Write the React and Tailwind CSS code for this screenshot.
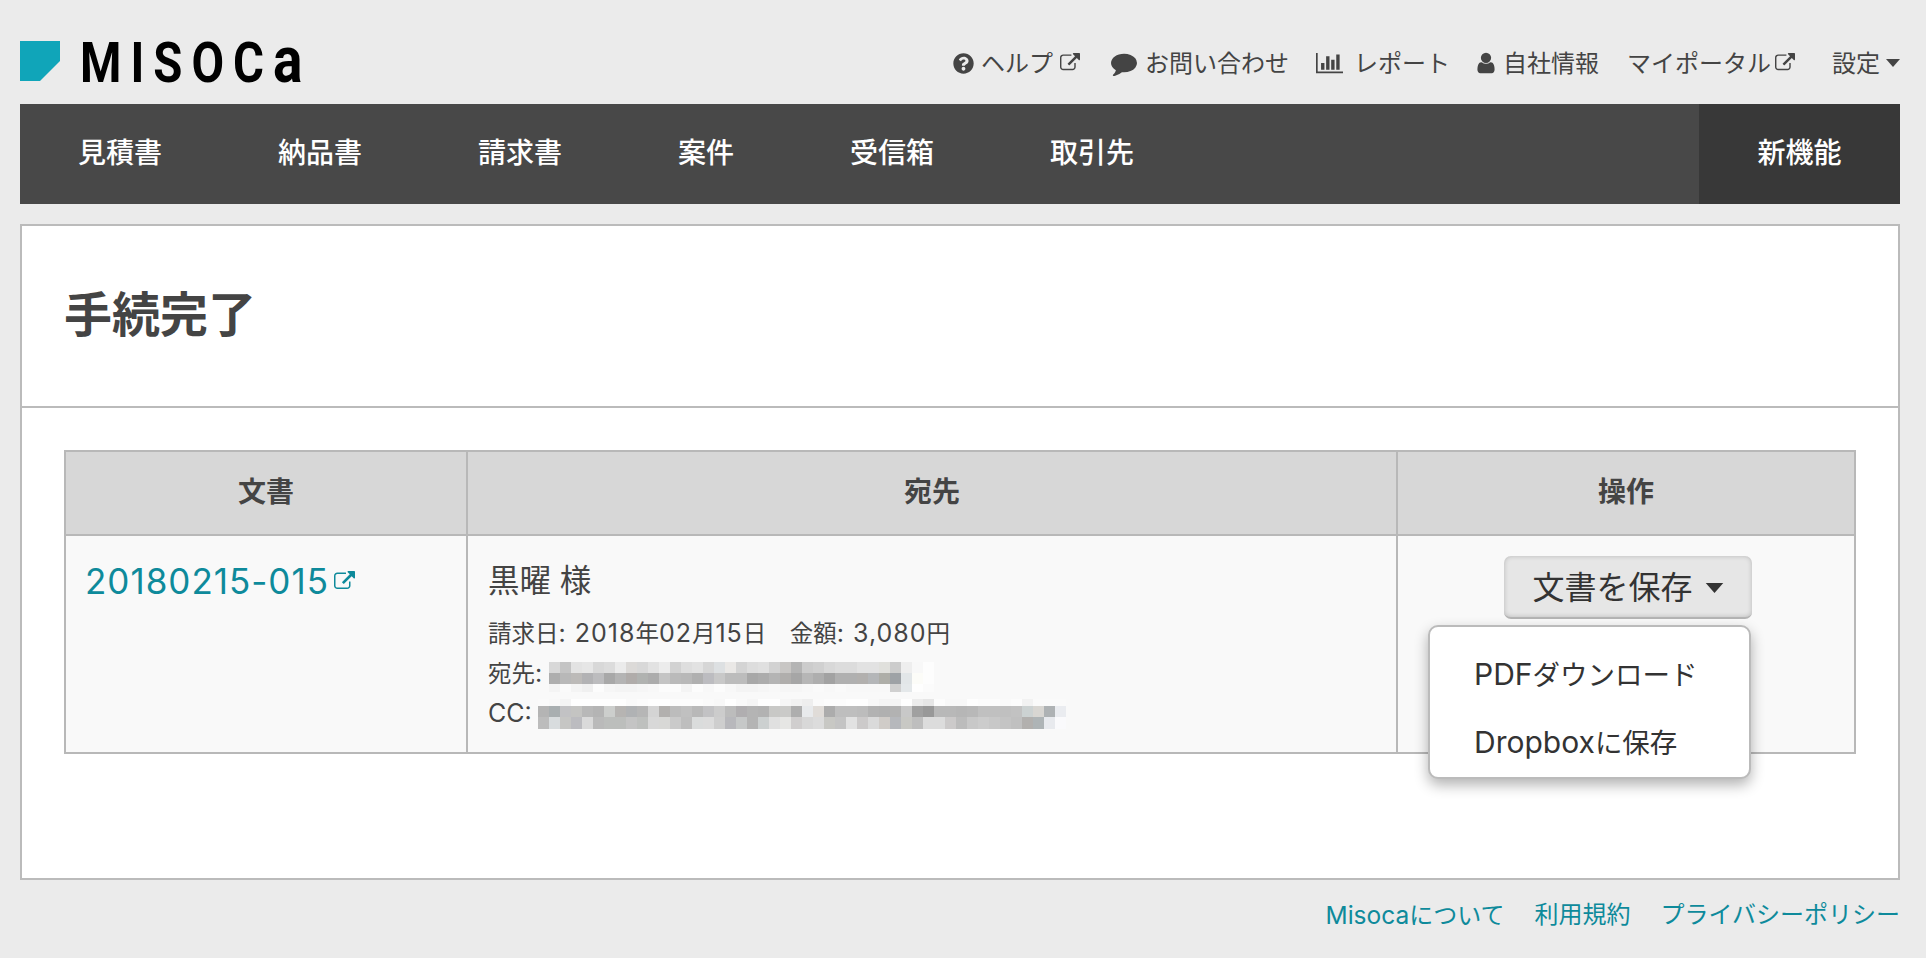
import { FaQuestionCircle } from "react-icons/fa";

const FONT = "[font-family:'Liberation_Sans','Noto_Sans_CJK_JP',sans-serif]";

const blurTo = [
  ["#d8d8d8", "#c4c4c4", "#e3e3e3", "#e6e6e6", "#d8d8d8", "#dcdcdc", "#ebebeb", "#dcdad8", "#d8d8d8", "#e2e2e2", "#ececec", "#d2d2d2", "#dedede", "#e2e2e2", "#d6d6d6", "#dde0e2", "#eae8e6", "#d4d4d4", "#dddddd", "#e0e0e0", "#d2d2d2", "#c8c6c4", "#b4b4b4", "#cccccc", "#d0d0d0", "#d8d8d8", "#dcdcdc", "#dcdcdc", "#e2e2e2", "#e2e2e2", "#e0e0dc", "#cccccc", "#eeeeee", "#f8f8f8", "#fdfdfd"],
  ["#aeaeae", "#b8b8b8", "#bcbab8", "#b2b2b4", "#bcbcbe", "#a8a8a8", "#b4b4b4", "#b0acaa", "#b0b2b0", "#acacac", "#c4c4c4", "#bababa", "#b8b8b8", "#b0b0b0", "#bcbcc0", "#c8c8c8", "#bcbcbc", "#bcbcbc", "#a8a8a8", "#acacac", "#b4b4b4", "#b0aeac", "#a6a6a6", "#b6b6b6", "#aeaeae", "#a2a2a2", "#b0b0b0", "#b0b0b0", "#b2b0ae", "#b4b6b8", "#aeaea8", "#9ea2a6", "#e2e6e8", "#fcfcf8", "#fdfdfd"],
  ["#f4f4f4", "#fafafa", "#f4f4f4", "#f0f0f0", "#fcfcfc", "#f6f6f6", "#f4f4f4", "#f4f4f4", "#f6f6f6", "#f8f8f8", "#fcfcfc", "#fcfcfc", "#f4f4f4", "#fcfcfc", "#f8f8f8", "#fcfcfc", "#f8f8f8", "#f4f4f4", "#f4f4f4", "#f6f6f6", "#f8f8f8", "#f6f6f6", "#f6f6f6", "#f8f8f8", "#fafafa", "#f8f8f8", "#fafafa", "#f8f8f8", "#f8f8f8", "#f8f8f8", "#f8f8f8", "#d0d0d0", "#e4e8ea", "#fefefe", "#fbfbfb"],
];

const blurCc = [
  ["#fafafa", "#f8f8f8", "#f4f4f4", "#fefefe", "#fefefe", "#fefefe", "#fefefe", "#fefefe", "#fafafa", "#fcfcfc", "#fefefe", "#fefefe", "#fcfcfc", "#fcfcfc", "#fcfcfc", "#fafafa", "#f8f8f8", "#ffffff", "#fafafa", "#f6f6f6", "#fefefe", "#fefefe", "#f6f6f6", "#f2f2f2", "#eeeeee", "#fafafa", "#fcfcfc", "#fcfcfc", "#fefefe", "#fefefe", "#f8f8f8", "#f4f4f4", "#f4f4f4", "#fefefe", "#ececec", "#e6e6e6", "#fcfcfc", "#f8f8f8", "#f8f8f8", "#fefefe", "#fcfcfc", "#fcfcfc", "#fafafa", "#fcfcfc", "#f2f2f2", "#fafafa", "#fafafa", "#fafafa"],
  ["#b4b4b4", "#a8aeb0", "#c2c2c4", "#c4c4c2", "#b8b8b8", "#b4b4b4", "#cccecc", "#b6b4b2", "#b0b2b4", "#b6b6b6", "#d4d4d4", "#b2b0ae", "#bcbcbc", "#c0c0c0", "#b8b8b8", "#c2c2c4", "#cccccc", "#bcbcbc", "#b0aeb0", "#b4b4b4", "#b2b2b2", "#c8c8c6", "#cacac8", "#aeaeae", "#e8eaec", "#e0dcd8", "#acacac", "#bebebe", "#bebebe", "#bcbcbc", "#b2b2b2", "#b0b0b0", "#b2b2b2", "#c8c8c8", "#a0a0a0", "#989898", "#b8b8b8", "#b8b8b8", "#b6b6b6", "#b8b8b8", "#c0c0c0", "#c0c0c0", "#c0c0c0", "#c2c2c2", "#ccd2d2", "#d8d6d2", "#aeb2b4", "#eaecf0"],
  ["#bcbcbc", "#d8dcde", "#c6c6c4", "#bcbcc0", "#dadada", "#bababa", "#bcbebc", "#bcbebc", "#c4c4c4", "#bec0be", "#d8d8d8", "#d8d8d6", "#cacaca", "#bebebe", "#dadcdc", "#dcdcdc", "#cecece", "#b8b8bc", "#c6c8c8", "#b4b4b4", "#ccd0d0", "#e0e0e0", "#e6e6e4", "#d0cece", "#d8d8d8", "#dcdcdc", "#c8c8c4", "#c4c4c4", "#e2e2e2", "#cccaca", "#dadada", "#d0ccc8", "#b6b8bc", "#c8c8c4", "#bebebe", "#dcdcdc", "#dcdcdc", "#cccaca", "#bcbcbc", "#c8c8c8", "#cccccc", "#c8c8c8", "#c4c4c4", "#c0c0c0", "#b2b0ae", "#aeb4b6", "#e8eaee", "#fafafc"],
];

// 個人情報のモザイク
const Blur = ({ rows, sizes }) => (
  <div className="flex flex-col">
    {rows.map((row, i) => (
      <div key={i} className="flex" style={{ height: sizes[i] }}>
        {row.map((c, j) => (
          <div key={j} className="w-[11px]" style={{ backgroundColor: c }} />
        ))}
      </div>
    ))}
  </div>
);

// 欧文は和文より少し大きく見える
const En = ({ children }) => <span className="font-['Inter'] text-[25px]">{children}</span>;
const Num = ({ children }) => <span className="font-['Inter'] text-[25px] tracking-[1px]">{children}</span>;

const ExternalIcon = ({ className }) => (
  <svg viewBox="0 0 1792 1792" fill="currentColor" className={className}>
    <path d="M1408 928v320q0 119-84.5 203.5t-203.5 84.5h-832q-119 0-203.5-84.5t-84.5-203.5v-832q0-119 84.5-203.5t203.5-84.5h704q14 0 23 9t9 23v64q0 14-9 23t-23 9h-704q-66 0-113 47t-47 113v832q0 66 47 113t113 47h832q66 0 113-47t47-113v-320q0-14 9-23t23-9h64q14 0 23 9t9 23zm384-864v512q0 26-19 45t-45 19-45-19l-176-176-652 652q-10 10-23 10t-23-10l-114-114q-10-10-10-23t10-23l652-652-176-176q-19-19-19-45t19-45 45-19h512q26 0 45 19t19 45z" />
  </svg>
);

const CommentIcon = () => (
  <svg viewBox="0 0 1792 1792" fill="currentColor" className="h-[26px] w-[26px]">
    <path d="M1792 896q0 174-120 321.5t-326 233-450 85.5q-70 0-145-8-198 175-460 242-49 14-114 22-17 2-30.5-9t-17.5-29v-1q-3-4-.5-12t2-10 4.5-9.5l6-9 7-8.5 8-9q7-8 31-34.5t34.5-38 31-39.5 32.5-51 27-59 26-76q-157-89-247.5-220t-90.5-281q0-130 71-248.5t191-204.5 286-136.5 348-50.5q244 0 450 85.5t326 233 120 321.5z" />
  </svg>
);

const ChartIcon = () => (
  <svg viewBox="0 0 2048 1792" fill="currentColor" className="h-[24px] w-[27px]">
    <path d="M640 896v512h-256v-512h256zm384-512v1024h-256v-1024h256zm1024 1152v128h-2048v-1536h128v1408h1920zm-640-896v768h-256v-768h256zm384-384v1152h-256v-1152h256z" />
  </svg>
);

const UserIcon = () => (
  <svg viewBox="0 0 1792 1792" fill="currentColor" className="h-[24px] w-[24px]">
    <path d="M1536 1399q0 109-62.5 187t-150.5 78h-854q-88 0-150.5-78t-62.5-187q0-85 8.5-160.5t31.5-152 58.5-131 94-89 134.5-34.5q131 128 313 128t313-128q76 0 134.5 34.5t94 89 58.5 131 31.5 152 8.5 160.5zm-256-887q0 159-112.5 271.5t-271.5 112.5-271.5-112.5-112.5-271.5 112.5-271.5 271.5-112.5 271.5 112.5 112.5 271.5z" />
  </svg>
);

const Caret = ({ className }) => (
  <svg viewBox="0 0 14 8" fill="currentColor" className={className}>
    <path d="M0 0h14L7 8z" />
  </svg>
);

const navItems = ["見積書", "納品書", "請求書", "案件", "受信箱", "取引先"];

const App = () => {
  return (
    <div className={`min-h-screen bg-[#ebebeb] pl-[20px] pr-[26px] text-[#444] ${FONT}`}>
      <header className="flex h-[104px] items-start justify-between">
        <div className="mt-[41px] flex items-start">
          <svg viewBox="0 0 40 40" className="h-[40px] w-[40px]">
            <path d="M0 0h40v20L20 40H0z" fill="#10a5b9" />
          </svg>
          <div className="ml-[20px] h-[40px] w-[220px] origin-left scale-x-[0.86] whitespace-nowrap font-['Roboto'] text-[55px] leading-[40px] font-bold tracking-[10.5px] text-black">
            MISOC<span className="text-[64px]">a</span>
          </div>
        </div>
        <div className="mt-[49px] flex h-[28px] items-center text-[24px] leading-[28px] text-[#444]">
          <FaQuestionCircle className="h-[21px] w-[21px]" />
          <span className="ml-[7px] pt-[1px]">ヘルプ</span>
          <ExternalIcon className="ml-[7px] h-[20px] w-[20px]" />
          <span className="ml-[31px]"><CommentIcon /></span>
          <span className="ml-[8px] pt-[1px]">お問い合わせ</span>
          <span className="ml-[27px]"><ChartIcon /></span>
          <span className="ml-[11px] pt-[1px]">レポート</span>
          <span className="ml-[24px]"><UserIcon /></span>
          <span className="ml-[5px] pt-[1px]">自社情報</span>
          <span className="ml-[28px] pt-[1px]">マイポータル</span>
          <ExternalIcon className="ml-[4px] h-[20px] w-[20px]" />
          <span className="ml-[37px] pt-[1px]">設定</span>
          <Caret className="ml-[6px] h-[8px] w-[14px]" />
        </div>
      </header>

      <nav className="flex h-[100px] items-center bg-[#484848] pl-[58px] text-[28px] font-medium text-white">
        <ul className="flex flex-1 gap-[116px]">
          {navItems.map((item) => (
            <li key={item}>{item}</li>
          ))}
        </ul>
        <div className="flex h-full w-[201px] items-center justify-center bg-[#383838]">新機能</div>
      </nav>

      <main className="mt-[20px] h-[656px] border-2 border-[#bbb] bg-white">
        <div className="flex h-[182px] items-center border-b-2 border-[#bbb] pl-[42px]">
          <h1 className="text-[48px] leading-none font-bold">手続完了</h1>
        </div>

        <div className="px-[42px] pt-[42px]">
          <table className="w-[1790px] table-fixed border-collapse">
            <colgroup>
              <col className="w-[402px]" />
              <col className="w-[930px]" />
              <col className="w-[458px]" />
            </colgroup>
            <thead>
              <tr className="h-[84px] bg-[#d7d7d7] text-[28px]">
                <th className="border-2 border-[#b8b8b8]">文書</th>
                <th className="border-2 border-[#b8b8b8]">宛先</th>
                <th className="border-2 border-[#b8b8b8]">操作</th>
              </tr>
            </thead>
            <tbody>
              <tr className="h-[218px] bg-[#f9f9f9] align-top">
                <td className="border-2 border-[#b8b8b8] pt-[25px] pl-[19px]">
                  <a className="flex items-center font-['Inter'] text-[35px] leading-[40px] tracking-[1px] text-[#0e8a9b]">
                    20180215-015
                    <ExternalIcon className="ml-[5px] h-[21px] w-[21px]" />
                  </a>
                </td>
                <td className="border-2 border-[#b8b8b8] pt-[25px] pl-[20px]">
                  <div className="text-[31.5px] leading-[40px]">黒曜 様</div>
                  <div className="mt-[12px] text-[23.5px] leading-[40px]">
                    請求日<Num>: 2018</Num>年<Num>02</Num>月<Num>15</Num>日　金額<Num>: 3,080</Num>円
                  </div>
                  <div className="flex h-[40px] items-center text-[23.5px]">
                    <span className="w-[61px]">宛先<En>:</En></span>
                    <div className="mt-[5px]"><Blur rows={blurTo} sizes={[11, 11, 8]} /></div>
                  </div>
                  <div className="flex h-[40px] items-center text-[23.5px]">
                    <span className="w-[50px]"><En>CC:</En></span>
                    <Blur rows={blurCc} sizes={[7, 11, 12]} />
                  </div>
                </td>
                <td className="relative border-2 border-[#b8b8b8]">
                  <button className="absolute top-[20px] left-[106px] flex h-[63px] w-[248px] items-center justify-center rounded-[7px] border-b-2 border-[#b4b4b4] bg-[#e6e6e6] pt-[3px] text-[32px] text-[#333] shadow-[inset_0_0_5px_rgba(0,0,0,0.2)]">
                    文書を保存
                    <Caret className="ml-[12px] h-[10px] w-[19px]" />
                  </button>
                  <ul className="absolute top-[89px] left-[30px] z-10 flex h-[154px] w-[323px] flex-col justify-center gap-[18px] rounded-[10px] border-2 border-[#bbb] bg-white pt-[14px] pl-[44px] text-[27.5px] leading-[48px] text-[#333] shadow-[0_6px_14px_rgba(0,0,0,0.3)]">
                    <li><span className="font-['Inter'] text-[30px]">PDF</span>ダウンロード</li>
                    <li><span className="font-['Inter'] text-[30px]">Dropbox</span>に保存</li>
                  </ul>
                </td>
              </tr>
            </tbody>
          </table>
        </div>
      </main>

      <footer className="mt-[21px] flex justify-end gap-[30px] text-[24px] leading-[28px] text-[#0e8a9b]">
        <a><span className="font-['Inter'] text-[24.5px]">Misoca</span>について</a>
        <a>利用規約</a>
        <a>プライバシーポリシー</a>
      </footer>
    </div>
  );
};

export default App;
